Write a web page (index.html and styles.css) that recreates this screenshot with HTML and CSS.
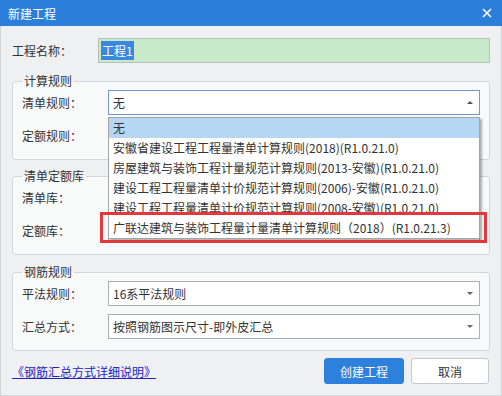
FILE: index.html
```html
<!DOCTYPE html>
<html lang="zh-CN">

<head>
    <meta http-equiv='Content-Type' content='text/html; charset=utf-8' />
    <meta name='viewport' content='width=device-width' />
    <title>新建工程</title>
    <link rel="stylesheet" href="styles.css">
</head>

<body>
    <div class="dialog">
        <div class="titlebar">
            <span class="title">新建工程</span>
            <svg class="close" width="10" height="10" viewBox="0 0 10 10">
                <path d="M1 1 L9 9 M9 1 L1 9" stroke="white" stroke-width="1.6" fill="none" />
            </svg>
        </div>
        <div class="content">
            <div class="name-row">
                <label>工程名称：</label>
                <div class="name-input"><span class="selected">工程1</span></div>
            </div>

            <fieldset class="group first">
                <legend>计算规则</legend>
                <div class="field">
                    <label>清单规则：</label>
                    <div class="select focus"><span>无</span><span class="arrow up"></span></div>
                </div>
                <div class="field">
                    <label>定额规则：</label>
                    <div class="select"><span></span><span class="arrow"></span></div>
                </div>
            </fieldset>

            <fieldset class="group second">
                <legend>清单定额库</legend>
                <div class="field">
                    <label>清单库：</label>
                    <div class="select"><span></span><span class="arrow"></span></div>
                </div>
                <div class="field">
                    <label>定额库：</label>
                    <div class="select"><span></span><span class="arrow"></span></div>
                </div>
            </fieldset>

            <fieldset class="group third">
                <legend>钢筋规则</legend>
                <div class="field">
                    <label>平法规则：</label>
                    <div class="select"><span>16系平法规则</span><span class="arrow"></span></div>
                </div>
                <div class="field">
                    <label>汇总方式：</label>
                    <div class="select"><span>按照钢筋图示尺寸-即外皮汇总</span><span class="arrow"></span></div>
                </div>
            </fieldset>

            <div class="footer">
                <a href="#" class="help">《钢筋汇总方式详细说明》</a>
                <div class="buttons">
                    <button class="btn primary">创建工程</button>
                    <button class="btn">取消</button>
                </div>
            </div>
        </div>

        <ul class="dropdown">
            <li class="hover">无</li>
            <li>安徽省建设工程工程量清单计算规则(2018)(R1.0.21.0)</li>
            <li>房屋建筑与装饰工程计量规范计算规则(2013-安徽)(R1.0.21.0)</li>
            <li>建设工程工程量清单计价规范计算规则(2006)-安徽(R1.0.21.0)</li>
            <li>建设工程工程量清单计价规范计算规则(2008-安徽)(R1.0.21.0)</li>
            <li>广联达建筑与装饰工程量计量清单计算规则（2018）(R1.0.21.3)</li>
        </ul>
        <div class="mark"></div>
    </div>
</body>

</html>
```

FILE: styles.css
```css
body {
    margin: 0;
    width: 502px;
    height: 396px;
    overflow: hidden;
    background-color: #eef0f1;
    font-family: "Noto Sans CJK SC", "Microsoft YaHei", sans-serif;
    font-size: 12px;
    color: #333;
}

.dialog {
    position: relative;
    width: 502px;
    height: 396px;
}

.titlebar {
    height: 26px;
    background-color: #2b7fda;
    color: white;
    display: flex;
    align-items: center;
    justify-content: space-between;
    padding: 0 10px 0 8px;
}

.content {
    height: 370px;
    box-sizing: border-box;
    border: 1px solid #d2d5d8;
    border-top: none;
    padding: 12px 11px 0 11px;
}

.name-row {
    display: flex;
    align-items: center;
    height: 25px;
}

.name-row label,
.field label {
    width: 86px;
    flex: none;
}

.name-input {
    flex: 1;
    height: 25px;
    box-sizing: border-box;
    border: 1px solid #b3c3b5;
    background-color: #c8eacb;
    padding: 0 2px;
    display: flex;
    align-items: center;
}

.selected {
    background-color: #3a87e0;
    color: white;
    line-height: 19px;
    padding: 0 1px;
}

.group {
    margin: 0;
    padding: 2px 9px 11px 9px;
    border: 1px solid #d3d6d9;
    border-radius: 3px;
    background-color: #f8f9f9;
    min-inline-size: 0;
}

.group legend {
    padding: 0 2px;
    line-height: 14px;
}

.group.first {
    margin-top: 11px;
}

.group.second {
    margin-top: 9px;
}

.group.third {
    margin-top: 10px;
}

.field {
    display: flex;
    align-items: center;
    height: 25px;
}

.field + .field {
    margin-top: 8px;
}

.select {
    flex: 1;
    height: 25px;
    box-sizing: border-box;
    border: 1px solid #abadb3;
    background-color: white;
    display: flex;
    align-items: center;
    justify-content: space-between;
    padding: 0 6px 0 4px;
}

.select.focus {
    border-color: #7397cf;
}

.arrow {
    width: 0;
    height: 0;
    border-left: 3px solid transparent;
    border-right: 3px solid transparent;
    border-top: 3px solid #666;
}

.arrow.up {
    border-top: none;
    border-bottom: 3px solid #555;
}

.footer {
    display: flex;
    align-items: center;
    justify-content: space-between;
    margin-top: 7px;
    padding-right: 1px;
}

.help {
    color: #2323c2;
    text-decoration: underline;
}

.buttons {
    display: flex;
    gap: 7px;
}

.btn {
    width: 78px;
    height: 26px;
    border: 1px solid #c5c7ca;
    border-radius: 3px;
    background-color: white;
    color: #333;
    font-family: inherit;
    font-size: 12px;
    padding: 0;
}

.btn.primary {
    width: 80px;
    background-color: #2d80dc;
    border-color: #2d80dc;
    color: white;
}

.dropdown {
    position: absolute;
    left: 108px;
    top: 117px;
    width: 372px;
    box-sizing: border-box;
    margin: 0;
    padding: 0;
    list-style: none;
    background-color: white;
    border: 1px solid #a5a5a5;
    box-shadow: 2px 2px 2px rgba(0, 0, 0, 0.3);
}

.dropdown li {
    line-height: 20px;
    padding-left: 4px;
    white-space: nowrap;
}

.dropdown li.hover {
    background-color: #b5d7f3;
}

.mark {
    position: absolute;
    left: 100px;
    top: 212px;
    width: 387px;
    height: 31px;
    box-sizing: border-box;
    border: 3px solid #e0383d;
}
```
